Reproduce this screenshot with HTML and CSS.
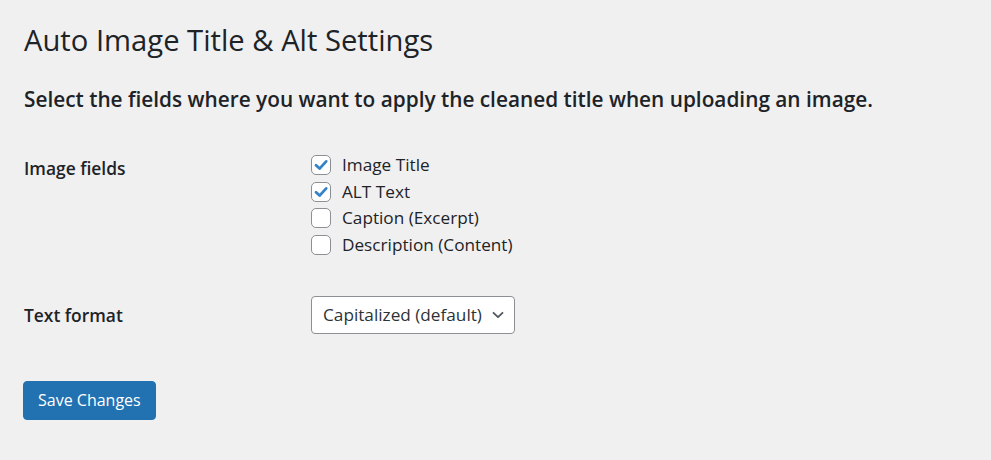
FILE: index.html
```html
<!DOCTYPE html>
<html lang="en">
<head>
    <meta charset="UTF-8">
    <meta name="viewport" content="width=device-width, initial-scale=1.0">
    <title>Auto Image Title &amp; Alt Settings</title>
    <link rel="stylesheet" href="styles.css">
</head>
<body>
    <div class="wrap">
        <h1>Auto Image Title &amp; Alt Settings</h1>
        <h2>Select the fields where you want to apply the cleaned title when uploading an image.</h2>

        <form class="settings-form" onsubmit="return false">
            <div class="form-row">
                <div class="row-label">Image fields</div>
                <div class="row-field checklist">
                    <label class="check-item">
                        <input type="checkbox" checked>
                        <span class="box">
                            <svg viewBox="0 0 20 20" width="20" height="20"><path d="M5 10.2 L8.6 13.6 L15.2 6.4" fill="none" stroke="#3582c4" stroke-width="2.8" stroke-linecap="round" stroke-linejoin="round"/></svg>
                        </span>
                        Image Title
                    </label>
                    <label class="check-item">
                        <input type="checkbox" checked>
                        <span class="box">
                            <svg viewBox="0 0 20 20" width="20" height="20"><path d="M5 10.2 L8.6 13.6 L15.2 6.4" fill="none" stroke="#3582c4" stroke-width="2.8" stroke-linecap="round" stroke-linejoin="round"/></svg>
                        </span>
                        ALT Text
                    </label>
                    <label class="check-item">
                        <input type="checkbox">
                        <span class="box"></span>
                        Caption (Excerpt)
                    </label>
                    <label class="check-item">
                        <input type="checkbox">
                        <span class="box"></span>
                        Description (Content)
                    </label>
                </div>
            </div>

            <div class="form-row format-row">
                <div class="row-label">Text format</div>
                <div class="row-field">
                    <div class="select">
                        <span>Capitalized (default)</span>
                        <svg viewBox="0 0 16 16" width="16" height="16"><path d="M3.5 5.8 L8 10.2 L12.5 5.8" fill="none" stroke="#50575e" stroke-width="1.8" stroke-linecap="round" stroke-linejoin="round"/></svg>
                    </div>
                </div>
            </div>

            <button type="submit" class="button-primary">Save Changes</button>
        </form>
    </div>
</body>
</html>
```

FILE: styles.css
```css
* {
    margin: 0;
    padding: 0;
    box-sizing: border-box;
}

body {
    background: #f0f0f1;
    color: #1d2327;
    font-family: 'Open Sans', 'Noto Sans', sans-serif;
    font-size: 17.2px;
}

.wrap {
    padding: 22px 24px 0 24px;
}

h1 {
    font-size: 29.2px;
    font-weight: 400;
    line-height: 36px;
}

h2 {
    font-size: 20.8px;
    font-weight: 600;
    line-height: 28px;
    margin-top: 27px;
}

.form-row {
    display: grid;
    grid-template-columns: 287px 1fr;
    align-items: start;
}

.form-row:first-child {
    margin-top: 42px;
}

.row-label {
    font-size: 17.4px;
    font-weight: 600;
    padding-top: 1px;
}

.checklist {
    display: flex;
    flex-direction: column;
    gap: 6.6px;
}

.check-item {
    display: flex;
    align-items: center;
    gap: 11px;
    line-height: 20px;
    cursor: pointer;
}

.check-item input {
    display: none;
}

.box {
    width: 20px;
    height: 20px;
    border: 1px solid #8c8f94;
    border-radius: 5px;
    background: #fff;
    display: flex;
    align-items: center;
    justify-content: center;
    flex-shrink: 0;
}

.box svg {
    display: block;
    margin: -1px;
}

.format-row {
    margin-top: 41px;
    align-items: center;
}

.format-row .row-label {
    padding-top: 0;
}

.select {
    width: 204px;
    height: 38px;
    border: 1px solid #8c8f94;
    border-radius: 4px;
    background: #fff;
    display: flex;
    align-items: center;
    justify-content: space-between;
    padding: 0 8px 0 11px;
    color: #2c3338;
    font-size: 17.2px;
}

.button-primary {
    margin-top: 47px;
    margin-left: -1px;
    background: #2271b1;
    color: #fff;
    border: 1px solid #2271b1;
    border-radius: 4px;
    font-family: inherit;
    font-size: 16px;
    height: 39px;
    padding: 0 14px;
    cursor: pointer;
}
```
